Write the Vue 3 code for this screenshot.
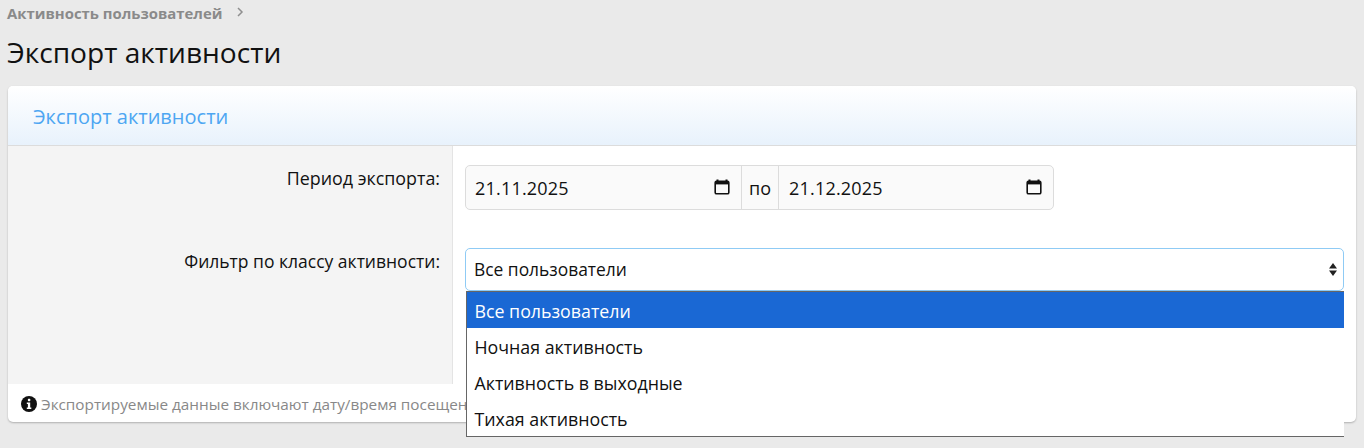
<script setup>
const options = ['Все пользователи', 'Ночная активность', 'Активность в выходные', 'Тихая активность']
const dates = ['21.11.2025', '21.12.2025']
</script>

<template>
  <div class="page">
    <nav class="crumbs">
      <span class="crumb">Активность пользователей</span>
      <svg class="chev" width="8" height="10" viewBox="0 0 8 10"><path d="M2 1l4 4-4 4" fill="none" stroke="#8f8f8f" stroke-width="1.5"/></svg>
    </nav>
    <h1 class="title">Экспорт активности</h1>
    <section class="card">
      <header class="card-head">Экспорт активности</header>
      <div class="card-body">
        <div class="row row-date">
          <label class="lab lab-wide">Период экспорта:</label>
          <div class="ctl">
            <div class="range">
              <div class="date">
                <span>{{ dates[0] }}</span>
                <svg class="cal" width="16" height="16" viewBox="0 0 16 16"><path d="M3.5 0.5v2M12.5 0.5v2" stroke="#111" stroke-width="2" fill="none"/><rect x="1.2" y="2.2" width="13.6" height="12.6" rx="1.4" fill="none" stroke="#111" stroke-width="1.6"/><rect x="1" y="2" width="14" height="3.4" fill="#111"/></svg>
              </div>
              <div class="to">по</div>
              <div class="date date-end">
                <span>{{ dates[1] }}</span>
                <svg class="cal" width="16" height="16" viewBox="0 0 16 16"><path d="M3.5 0.5v2M12.5 0.5v2" stroke="#111" stroke-width="2" fill="none"/><rect x="1.2" y="2.2" width="13.6" height="12.6" rx="1.4" fill="none" stroke="#111" stroke-width="1.6"/><rect x="1" y="2" width="14" height="3.4" fill="#111"/></svg>
              </div>
            </div>
          </div>
        </div>
        <div class="row row-sel">
          <label class="lab">Фильтр по классу активности:</label>
          <div class="ctl">
            <div class="select-wrap">
              <div class="select">
                <span>Все пользователи</span>
                <svg width="8" height="13" viewBox="0 0 8 13"><path d="M4 0l4 5.500H0zM4 13L0 7.500h8z" fill="#222"/></svg>
              </div>
              <ul class="menu">
                <li v-for="(o, i) in options" :key="o" :class="{ on: i === 0 }">{{ o }}</li>
              </ul>
            </div>
          </div>
        </div>
      </div>
      <footer class="card-foot">
        <svg width="16" height="16" viewBox="0 0 16 16"><circle cx="8" cy="8" r="8" fill="#111"/><rect x="6.900" y="2.800" width="2.400" height="2.400" rx=".6" fill="#fff"/><path d="M5.800 6.600h3.400v5h1.100v1.500H5.800v-1.500h1.100V8.100H5.800z" fill="#fff"/></svg>
        <span class="note">Экспортируемые данные включают дату/время посещен</span>
      </footer>
    </section>
  </div>
</template>

<style>
html, body { margin: 0; background: #eaeaea; height: 448px; overflow: hidden; }
</style>

<style scoped>
.page { padding: 0 8px; font-family: "Open Sans", "Noto Sans", sans-serif; color: #111; }
.crumbs { height: 26px; display: flex; align-items: center; gap: 14px; }
.crumb { font-size: 14.9px; font-weight: 700; color: #8a8a8a; margin-left: -1px; }
.chev { margin-top: -2px; }
.title { margin: 8px 0 2px -1px; height: 50px; font-size: 28.1px; font-weight: 400; line-height: 36px; color: #111; }
.card { background: #fff; border-radius: 5px; box-shadow: 0 1px 2px rgba(0,0,0,.25); height: 336px; display: flex; flex-direction: column; }
.card-head { height: 60px; box-sizing: border-box; padding: 2px 25px 0; display: flex; align-items: center; font-size: 20px; color: #4da6f2; border-bottom: 1px solid #dcdcdc; background: linear-gradient(#fff, #e8f2fc); border-radius: 5px 5px 0 0; flex: none; }
.card-body { height: 238px; flex: none; background: linear-gradient(to right, #f4f4f4 444px, #e4e4e4 444px, #e4e4e4 445px, #fff 445px); box-sizing: border-box; padding-top: 19px; }
.row { display: flex; }
.row-date { height: 45px; margin-bottom: 38px; }
.lab { width: 432px; flex: none; text-align: right; font-size: 17.5px; line-height: 26px; color: #111; }
.lab-wide { font-size: 17.85px; }
.ctl { margin-left: 25px; width: 879px; flex: none; }
.range { display: flex; width: 589px; height: 45px; box-sizing: border-box; border: 1px solid #dcdcdc; border-radius: 5px; background: #fafafa; font-size: 18px; }
.date { flex: none; width: 275px; box-sizing: border-box; display: flex; align-items: center; justify-content: space-between; padding: 0 11px 0 9px; letter-spacing: .2px; }
.date-end { width: 274px; padding-left: 10px; }
.to { width: 38px; flex: none; box-sizing: border-box; border-left: 1px solid #dcdcdc; border-right: 1px solid #dcdcdc; display: flex; align-items: center; justify-content: center; background: #fafafa; }
.cal { margin-top: -2px; }
.select-wrap { position: relative; }
.select { height: 43px; box-sizing: border-box; border: 1px solid #8fcbf5; border-radius: 5px; background: #fff; display: flex; align-items: center; justify-content: space-between; padding: 0 6px 2px 8px; font-size: 17.4px; }
.select svg { margin-top: 2px; }
.menu { position: absolute; left: 1px; right: 0; top: 43px; margin: 0; padding: 0; list-style: none; background: #fff; border-left: 1px solid #666; border-top: 1px solid #666; border-bottom: 1px solid #666; font-size: 17.8px; }
.menu li { height: 36px; line-height: 39px; padding-left: 7.5px; }
.menu li.on { background: #1a68d4; color: #fff; }
.card-foot { flex: 1; display: flex; align-items: center; gap: 4px; padding: 2px 13px 0; font-size: 15.3px; color: #888; white-space: nowrap; }
.card-foot svg { flex: none; margin-top: -1px; }
</style>
